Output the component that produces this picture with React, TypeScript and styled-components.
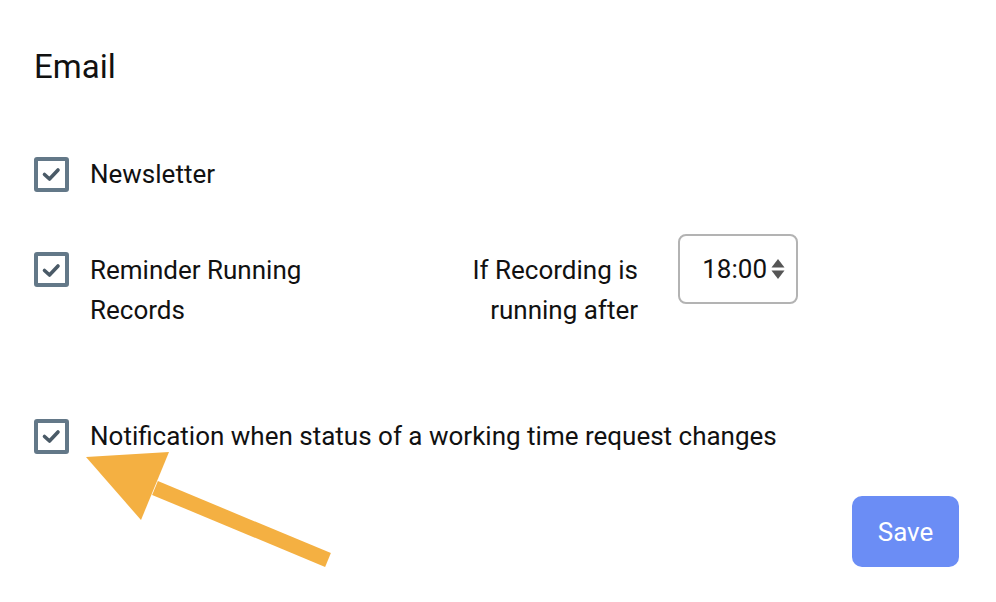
import React from "react";
import styled, { createGlobalStyle } from "styled-components";

const Global = createGlobalStyle`
  html, body { margin: 0; padding: 0; background: #ffffff; }
  body { font-family: Roboto, "Noto Sans", "Liberation Sans", sans-serif; color: #111; }
  * { box-sizing: border-box; }
`;

const Page = styled.div`
  position: relative;
  width: 996px;
  height: 602px;
  padding: 47px 37px 0 34px;
  overflow: hidden;
`;

const Heading = styled.h2`
  margin: 0;
  font-size: 33px;
  font-weight: 400;
  line-height: 40px;
  color: #111;
`;

const List = styled.div`
  display: flex;
  flex-direction: column;
  margin-top: 67px;
`;

const Row = styled.div<{ $gapTop?: number }>`
  display: grid;
  grid-template-columns: 35px 21px 240px 108px 200px 40px 120px;
  align-items: start;
  margin-top: ${(p) => p.$gapTop ?? 0}px;
`;

const SimpleRow = styled.div<{ $gapTop?: number }>`
  display: flex;
  align-items: center;
  gap: 21px;
  height: 40px;
  margin-top: ${(p) => p.$gapTop ?? 0}px;
`;

const Box = styled.span<{ $offset?: number }>`
  display: flex;
  align-items: center;
  justify-content: center;
  width: 35px;
  height: 35px;
  border: 4px solid #637888;
  border-radius: 3px;
  margin-top: ${(p) => p.$offset ?? 0}px;
  flex: none;
`;

const Label = styled.span<{ $pad?: number; $col?: number; $align?: string; $wrap?: boolean }>`
  font-size: 26px;
  line-height: 40px;
  color: #111;
  padding-top: ${(p) => p.$pad ?? 0}px;
  grid-column: ${(p) => p.$col ?? "auto"};
  text-align: ${(p) => p.$align ?? "left"};
  white-space: ${(p) => (p.$wrap ? "normal" : "nowrap")};
`;

const TimeBox = styled.div`
  grid-column: 7;
  display: flex;
  align-items: center;
  justify-content: flex-end;
  gap: 4px;
  width: 120px;
  height: 70px;
  padding-right: 11px;
  border: 2px solid #b3b3b3;
  border-radius: 8px;
  font-size: 26px;
  color: #111;
`;

const Footer = styled.div`
  display: flex;
  justify-content: flex-end;
  margin-top: 40px;
`;

const SaveButton = styled.button`
  width: 107px;
  height: 71px;
  border: none;
  border-radius: 10px;
  background: #6b8df5;
  color: #ffffff;
  font-family: Roboto, "Noto Sans", sans-serif;
  font-size: 26px;
  font-weight: 400;
  cursor: pointer;
`;

const ArrowOverlay = styled.svg`
  position: absolute;
  left: 0;
  top: 0;
  pointer-events: none;
`;

const Check = () => (
  <svg width="21" height="16" viewBox="0 0 21 16">
    <path d="M3.5 8.5 L8.5 13 L17 4" fill="none" stroke="#4a5a67" strokeWidth="3.6" strokeLinecap="round" strokeLinejoin="round" />
  </svg>
);

const Spinner = () => (
  <svg width="14" height="22" viewBox="0 0 14 22">
    <path d="M7 1 L13.5 9.5 L0.5 9.5 Z" fill="#555" />
    <path d="M0.5 12.5 L13.5 12.5 L7 21 Z" fill="#555" />
  </svg>
);

export default function App() {
  return (
    <>
      <Global />
      <Page>
        <Heading>Email</Heading>
        <List>
          <SimpleRow>
            <Box><Check /></Box>
            <Label>Newsletter</Label>
          </SimpleRow>
          <Row $gapTop={40}>
            <Box $offset={18}><Check /></Box>
            <Label $pad={16} $col={3} $wrap>
              Reminder Running Records
            </Label>
            <Label $pad={16} $col={5} $align="right" $wrap>
              If Recording is running after
            </Label>
            <TimeBox>
              18:00
              <Spinner />
            </TimeBox>
          </Row>
          <SimpleRow $gapTop={86}>
            <Box><Check /></Box>
            <Label>Notification when status of a working time request changes</Label>
          </SimpleRow>
        </List>
        <Footer>
          <SaveButton>Save</SaveButton>
        </Footer>
        <ArrowOverlay width="996" height="602" viewBox="0 0 996 602">
          <line x1="155" y1="488" x2="328" y2="560" stroke="#f4b042" strokeWidth="15" />
          <polygon points="86,457 169,452 141,520" fill="#f4b042" />
        </ArrowOverlay>
      </Page>
    </>
  );
}
